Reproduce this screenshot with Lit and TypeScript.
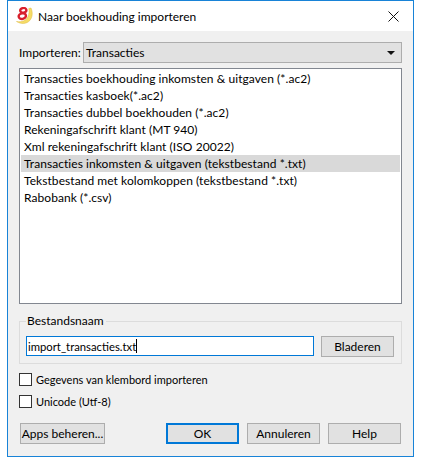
import { LitElement, css, html } from "lit";
import { customElement, property } from "lit/decorators.js";

@customElement("app-root")
export class AppRoot extends LitElement {
  @property({ type: Array }) options: string[] = [
    "Transacties boekhouding inkomsten & uitgaven (*.ac2)",
    "Transacties kasboek(*.ac2)",
    "Transacties dubbel boekhouden (*.ac2)",
    "Rekeningafschrift klant (MT 940)",
    "Xml rekeningafschrift klant (ISO 20022)",
    "Transacties inkomsten & uitgaven (tekstbestand *.txt)",
    "Tekstbestand met kolomkoppen (tekstbestand *.txt)",
    "Rabobank (*.csv)",
  ];
  @property({ type: Number }) selected = 5;

  static styles = css`
    :host {
      display: block;
      width: 421px;
      height: 464px;
      background: #fff;
      font-family: Lato, Roboto, sans-serif;
      font-size: 12px;
      color: #000;
      padding: 0 7px 7px;
      box-sizing: border-box;
    }

    .window {
      height: 457px;
      box-sizing: border-box;
      border: 1px solid #1883d7;
      background: #f0f0f0;
      display: flex;
      flex-direction: column;
    }

    .titlebar {
      height: 30px;
      flex: none;
      background: #fff;
      display: flex;
      align-items: center;
      padding: 0 14px 0 8px;
      gap: 4px;
    }

    .title {
      flex: 1;
    }

    .content {
      flex: 1;
      display: flex;
      flex-direction: column;
      padding: 11px 11px 12px;
    }

    .import-row {
      display: flex;
      align-items: center;
      height: 21px;
    }

    .import-label {
      width: 64px;
      flex: none;
    }

    .select {
      flex: 1;
      height: 21px;
      box-sizing: border-box;
      border: 1px solid #adadad;
      background: #e1e1e1;
      display: flex;
      align-items: center;
      justify-content: space-between;
      padding: 0 6px 0 2px;
    }

    .caret {
      width: 0;
      height: 0;
      border-left: 4px solid transparent;
      border-right: 4px solid transparent;
      border-top: 4px solid #111;
    }

    .list {
      margin-top: 5px;
      height: 236px;
      box-sizing: border-box;
      border: 1px solid #828790;
      background: #fff;
      padding: 1px;
    }

    .option {
      height: 17px;
      line-height: 17px;
      padding-left: 3px;
      white-space: nowrap;
      letter-spacing: 0.06px;
    }

    .option.selected {
      background: #d9d9d9;
    }

    .group {
      position: relative;
      margin-top: 17px;
      height: 43px;
      box-sizing: border-box;
      border: 1px solid #dcdcdc;
      display: flex;
      align-items: flex-start;
      padding: 14px 7px 0 6px;
      gap: 7px;
    }

    .group-label {
      position: absolute;
      left: 6px;
      top: -9px;
      background: #f0f0f0;
      padding: 0 2px 0 1px;
      line-height: 16px;
    }

    .filename {
      flex: 1;
      height: 20px;
      box-sizing: border-box;
      border: 1px solid #0078d7;
      background: #fff;
      display: flex;
      align-items: center;
      padding-left: 1px;
      white-space: pre;
      font-size: 11.3px;
    }

    .cursor {
      width: 1px;
      height: 14px;
      background: #000;
    }

    .btn {
      box-sizing: border-box;
      width: 73px;
      height: 21px;
      flex: none;
      border: 1px solid #adadad;
      background: #e1e1e1;
      display: flex;
      align-items: center;
      justify-content: center;
      white-space: nowrap;
    }

    .btn.default {
      border: 2px solid #0078d7;
    }

    .check {
      display: flex;
      align-items: center;
      gap: 4px;
      height: 13px;
      margin-top: 9px;
      font-size: 11px;
    }

    .box {
      width: 13px;
      height: 13px;
      box-sizing: border-box;
      border: 1px solid #333;
      background: #fff;
      flex: none;
    }

    .footer {
      margin-top: auto;
      display: flex;
      padding-left: 1px;
      gap: 8px;
    }

    .btn.apps {
      width: 85px;
      margin-right: 53px;
    }
  `;

  render() {
    return html`
      <div class="window">
        <div class="titlebar">
          <svg width="18" height="18" viewBox="0 0 18 18">
            <path d="M.5 14.5c5 .8 9.500-.5 11.500-5 1.200-2.700 1.300-5.500.8-8l2.200-.5c1.800 4 1.800 9-1.200 12.500-3 3.500-8.500 4-13.300 1z" fill="#f6dc66" stroke="#dcb93a" stroke-width=".5" />
            <ellipse cx="7.300" cy="3.300" rx="3.100" ry="2.300" transform="rotate(-12 7.300 3.300)" fill="none" stroke="#d8202c" stroke-width="2.400" />
            <ellipse cx="6.300" cy="9.100" rx="3.700" ry="2.800" transform="rotate(-12 6.300 9.100)" fill="none" stroke="#d8202c" stroke-width="2.400" />
          </svg>
          <span class="title">Naar boekhouding importeren</span>
          <svg width="11" height="11" viewBox="0 0 11 11">
            <path d="M.5 .5l10 10M10.500 .5l-10 10" stroke="#111" stroke-width="1" fill="none" />
          </svg>
        </div>
        <div class="content">
          <div class="import-row">
            <span class="import-label">Importeren:</span>
            <div class="select">
              <span>Transacties</span>
              <span class="caret"></span>
            </div>
          </div>
          <div class="list">
            ${this.options.map(
              (option, index) => html`
                <div class="option ${index === this.selected ? "selected" : ""}">${option}</div>
              `
            )}
          </div>
          <div class="group">
            <span class="group-label">Bestandsnaam</span>
            <div class="filename">import_transacties.txt<span class="cursor"></span></div>
            <div class="btn">Bladeren</div>
          </div>
          <label class="check"><span class="box"></span>Gegevens van klembord importeren</label>
          <label class="check"><span class="box"></span>Unicode (Utf-8)</label>
          <div class="footer">
            <div class="btn apps">Apps beheren...</div>
            <div class="btn default">OK</div>
            <div class="btn">Annuleren</div>
            <div class="btn">Help</div>
          </div>
        </div>
      </div>
    `;
  }
}
